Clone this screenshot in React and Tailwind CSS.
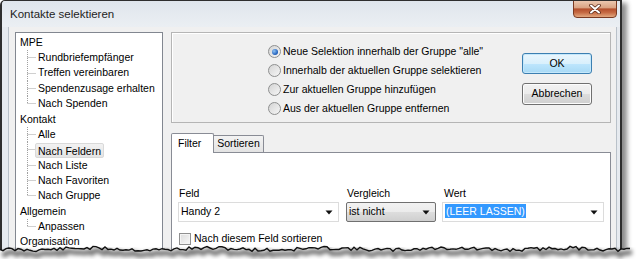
import React from 'react';

const tree = [
  { label: 'MPE', children: ['Rundbriefempfänger', 'Treffen vereinbaren', 'Spendenzusage erhalten', 'Nach Spenden'] },
  { label: 'Kontakt', children: ['Alle', 'Nach Feldern', 'Nach Liste', 'Nach Favoriten', 'Nach Gruppe'] },
  { label: 'Allgemein', children: ['Anpassen'] },
  { label: 'Organisation', children: [] },
];

const radios = [
  'Neue Selektion innerhalb der Gruppe "alle"',
  'Innerhalb der aktuellen Gruppe selektieren',
  'Zur aktuellen Gruppe hinzufügen',
  'Aus der aktuellen Gruppe entfernen',
];

// torn paper edge along the bottom
let seed = 11;
const rnd = () => {
  seed = (seed * 9301 + 49297) % 233280;
  return seed / 233280;
};
const edge = [];
for (let x = 0; x <= 630; x += 3) {
  edge.push([x, 249 + (rnd() - 0.5) * 3.6 + Math.sin(x / 19) * 0.9]);
}
const edgeLine = edge.map(([x, y], i) => `${i ? 'L' : 'M'}${x} ${y.toFixed(1)}`).join(' ');

function Arrow() {
  return (
    <svg width="8" height="5" viewBox="0 0 8 5" className="shrink-0">
      <path d="M0.5 0.5 L7.5 0.5 L4 4.5 Z" fill="#111" />
    </svg>
  );
}

function Radio({ checked }) {
  return (
    <div className="w-[13px] h-[13px] rounded-full border border-[#8e8f8f] bg-[linear-gradient(135deg,#d4d4d4,#f6f6f6)] flex items-center justify-center shrink-0">
      {checked && <div className="w-[6px] h-[6px] rounded-full bg-[radial-gradient(circle_at_35%_35%,#8fc3f5,#1c5bb8_70%)]" />}
    </div>
  );
}

function TreeChild({ text, last, selected }) {
  return (
    <div className="h-[15.35px] flex items-center pl-[10px]">
      <svg width="12" height="15.35" className="shrink-0">
        <line x1="1.5" y1="0" x2="1.5" y2={last ? 7.7 : 15.35} stroke="#a0a0a0" strokeDasharray="1 1" />
        <line x1="1.5" y1="7.5" x2="10" y2="7.5" stroke="#a0a0a0" strokeDasharray="1 1" />
      </svg>
      {selected ? (
        <span className="-ml-[3px] px-[2px] h-[15px] leading-[14px] rounded-[2px] border border-[#d9d9d9] bg-[linear-gradient(#f2f2f2,#e4e4e4)]">{text}</span>
      ) : (
        <span>{text}</span>
      )}
    </div>
  );
}

export default function App() {
  return (
    <div className="w-[639px] h-[269px] bg-white relative overflow-hidden font-['Liberation_Sans',Arial,sans-serif] text-[10.5px] text-black">
      <div className="w-[622px] h-[269px] bg-[#e6eaef] border-l-2 border-t border-r-2 border-[#2e2e2e] rounded-tl-[5px] shadow-[5px_3px_5px_rgba(0,0,0,0.45)] flex flex-col overflow-hidden">
        <div className="h-[26px] shrink-0 relative flex items-center pl-[8px] pt-[1px] bg-[linear-gradient(#dfe5ec,#ebeff3)]">
          <span className="text-[11.5px] text-[#1e1e1e]">Kontakte selektieren</span>
          <div className="absolute right-[3px] -top-px w-[44px] h-[18px] rounded-b-[4px] border border-[#7a3a22] bg-[linear-gradient(#ebc7af_0%,#d9a383_42%,#b34f2d_50%,#c66a43_72%,#e2a87f_100%)] flex items-center justify-center">
            <svg width="12" height="10" viewBox="0 0 12 10">
              <path d="M2 1.5 L10 8.5 M10 1.5 L2 8.5" stroke="#5a2a18" strokeWidth="3.6" strokeLinecap="round" />
              <path d="M2 1.5 L10 8.5 M10 1.5 L2 8.5" stroke="#fff" strokeWidth="2" strokeLinecap="round" />
            </svg>
          </div>
        </div>

        <div className="flex-1 min-h-0 overflow-hidden ml-[6px] mr-[3px] bg-[#f0f0f0] border-l border-r border-[#b9c1c9] flex items-start pl-[6px] pr-[5px] pt-[5px] gap-[8px]">
          <div className="w-[148px] h-[240px] bg-white border border-[#828790] pt-[2px] shrink-0">
            {tree.map((g) => (
              <div key={g.label}>
                <div className="h-[15.35px] flex items-center pl-[4px]">{g.label}</div>
                {g.children.map((c, i) => (
                  <TreeChild key={c} text={c} last={i === g.children.length - 1} selected={c === 'Nach Feldern'} />
                ))}
              </div>
            ))}
          </div>

          <div className="flex-1 flex flex-col">
            <div className="h-[91px] shrink-0 border border-[#b5b5b5] shadow-[inset_1px_1px_0_#fff] flex pl-[96px] pr-[18px]">
              <div className="pt-[9px] flex flex-col">
                {radios.map((r, i) => (
                  <div key={r} className="h-[19px] flex items-center gap-[2px]">
                    <Radio checked={i === 0} />
                    <span>{r}</span>
                  </div>
                ))}
              </div>
              <div className="ml-auto pt-[20px] flex flex-col gap-[9px]">
                <div className="w-[70px] h-[21px] rounded-[3px] border border-[#3c7fb1] bg-[linear-gradient(#eaf6fd_0%,#d9f0fc_50%,#bee6fd_51%,#a7d9f5_100%)] shadow-[inset_0_0_0_1px_#c5e8fb] flex items-center justify-center">OK</div>
                <div className="w-[70px] h-[22px] rounded-[3px] border border-[#707070] bg-[linear-gradient(#f2f2f2_0%,#ebebeb_50%,#dddddd_51%,#cfcfcf_100%)] shadow-[inset_0_0_0_1px_#fcfcfc] flex items-center justify-center">Abbrechen</div>
              </div>
            </div>

            <div className="mt-[10px] flex items-start shrink-0">
              <div className="w-[43px] h-[20px] bg-white border border-b-0 border-[#898c95] rounded-t-[2px] pl-[6px] pt-[2px] relative z-10">Filter</div>
              <div className="mt-[2px] w-[50px] h-[17px] border border-l-0 border-b-0 border-[#898c95] rounded-tr-[2px] bg-[linear-gradient(#f3f3f3,#e3e3e3)] flex items-center justify-center">Sortieren</div>
            </div>
            <div className="-mt-px h-[110px] shrink-0 bg-white border border-[#898c95] px-[6px] pt-[32px]">
              <div className="flex">
                <div className="w-[161px]">
                  <div className="h-[16px] leading-[16px] pl-[1px]">Feld</div>
                  <div className="mt-[1px] h-[20px] border border-[#dcdcdc] bg-white flex items-center pl-[2px] pr-[5px]">
                    <span className="flex-1">Handy 2</span>
                    <Arrow />
                  </div>
                </div>
                <div className="w-[90px] ml-[7px]">
                  <div className="h-[16px] leading-[16px] pl-[1px]">Vergleich</div>
                  <div className="mt-[1px] h-[20px] rounded-[2px] border border-[#707070] bg-[linear-gradient(#f2f2f2_0%,#ebebeb_50%,#dddddd_51%,#cfcfcf_100%)] flex items-center pl-[2px] pr-[5px]">
                    <span className="flex-1">ist nicht</span>
                    <Arrow />
                  </div>
                </div>
                <div className="w-[162px] ml-[6px]">
                  <div className="h-[16px] leading-[16px] pl-[2px]">Wert</div>
                  <div className="mt-[1px] h-[20px] border border-[#dcdcdc] bg-white flex items-center pl-[2px] pr-[5px]">
                    <span className="flex-1">
                      <span className="bg-[#3399ff] text-white px-px py-[1px]">(LEER LASSEN)</span>
                    </span>
                    <Arrow />
                  </div>
                </div>
              </div>
              <div className="mt-[9px] flex items-center gap-[3px] pl-[1px]">
                <div className="w-[12px] h-[12px] border border-[#8f8f8f] bg-[linear-gradient(135deg,#dcdcdc,#f8f8f8)] shadow-[inset_0_0_0_1px_#f4f4f4]" />
                <span>Nach diesem Feld sortieren</span>
              </div>
            </div>
          </div>
        </div>
      </div>

      <svg className="absolute left-0 top-0 pointer-events-none" width="639" height="269" viewBox="0 0 639 269">
        <defs>
          <filter id="blur" x="-5%" y="-50%" width="110%" height="200%">
            <feGaussianBlur stdDeviation="2.2" />
          </filter>
        </defs>
        <path d={`${edgeLine} L639 251 L639 269 L0 269 Z`} fill="#fff" />
        <path d={edgeLine} transform="translate(2 4)" stroke="#000" strokeOpacity="0.55" strokeWidth="5" fill="none" filter="url(#blur)" />
        <path d={edgeLine} stroke="#111" strokeWidth="1.4" fill="none" />
      </svg>
    </div>
  );
}
